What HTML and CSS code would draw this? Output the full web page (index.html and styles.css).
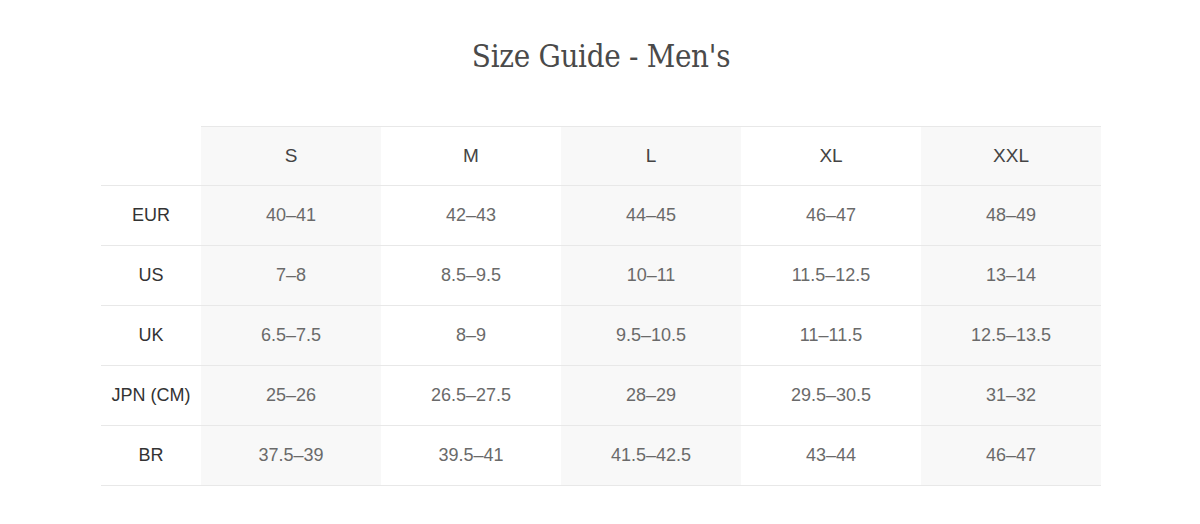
FILE: index.html
```html
<!DOCTYPE html>
<html>
<head>
<meta charset="utf-8">
<link rel="stylesheet" href="styles.css">
</head>
<body>
<div class="page">
  <h1 class="title">Size Guide - Men's</h1>
  <table class="sizes">
    <thead>
      <tr>
        <th class="corner"></th>
        <th class="shade">S</th>
        <th>M</th>
        <th class="shade">L</th>
        <th>XL</th>
        <th class="shade">XXL</th>
      </tr>
    </thead>
    <tbody>
      <tr><th>EUR</th><td class="shade">40–41</td><td>42–43</td><td class="shade">44–45</td><td>46–47</td><td class="shade">48–49</td></tr>
      <tr><th>US</th><td class="shade">7–8</td><td>8.5–9.5</td><td class="shade">10–11</td><td>11.5–12.5</td><td class="shade">13–14</td></tr>
      <tr><th>UK</th><td class="shade">6.5–7.5</td><td>8–9</td><td class="shade">9.5–10.5</td><td>11–11.5</td><td class="shade">12.5–13.5</td></tr>
      <tr><th>JPN (CM)</th><td class="shade">25–26</td><td>26.5–27.5</td><td class="shade">28–29</td><td>29.5–30.5</td><td class="shade">31–32</td></tr>
      <tr><th>BR</th><td class="shade">37.5–39</td><td>39.5–41</td><td class="shade">41.5–42.5</td><td>43–44</td><td class="shade">46–47</td></tr>
    </tbody>
  </table>
</div>
</body>
</html>
```
FILE: styles.css
```css
html, body {
  margin: 0;
  padding: 0;
  background: #fff;
}
.page {
  display: flex;
  flex-direction: column;
  align-items: center;
  padding-top: 32px;
  padding-left: 2px;
}
.title {
  margin: 0;
  font-family: "DejaVu Serif Condensed", "DejaVu Serif", serif;
  font-stretch: condensed;
  font-weight: normal;
  font-size: 31px;
  line-height: 48px;
  color: #4a4a4a;
  letter-spacing: -0.3px;
}
.sizes {
  margin-top: 46px;
  width: 1000px;
  border-collapse: collapse;
  table-layout: fixed;
  font-family: "Liberation Sans", Arial, sans-serif;
  font-size: 18px;
}
.sizes th, .sizes td {
  height: 59px;
  padding: 0;
  text-align: center;
  vertical-align: middle;
  font-weight: normal;
  border-bottom: 1px solid #e8e8e8;
}
.sizes thead th {
  height: 58px;
  border-top: 1px solid #e8e8e8;
  color: #444;
  font-size: 19px;
}
.sizes thead th.corner {
  border-top: none;
  width: 100px;
}
.sizes tbody th {
  color: #333;
}
.sizes td {
  color: #6a6a6a;
}
.shade {
  background: #f8f8f8;
}
```
